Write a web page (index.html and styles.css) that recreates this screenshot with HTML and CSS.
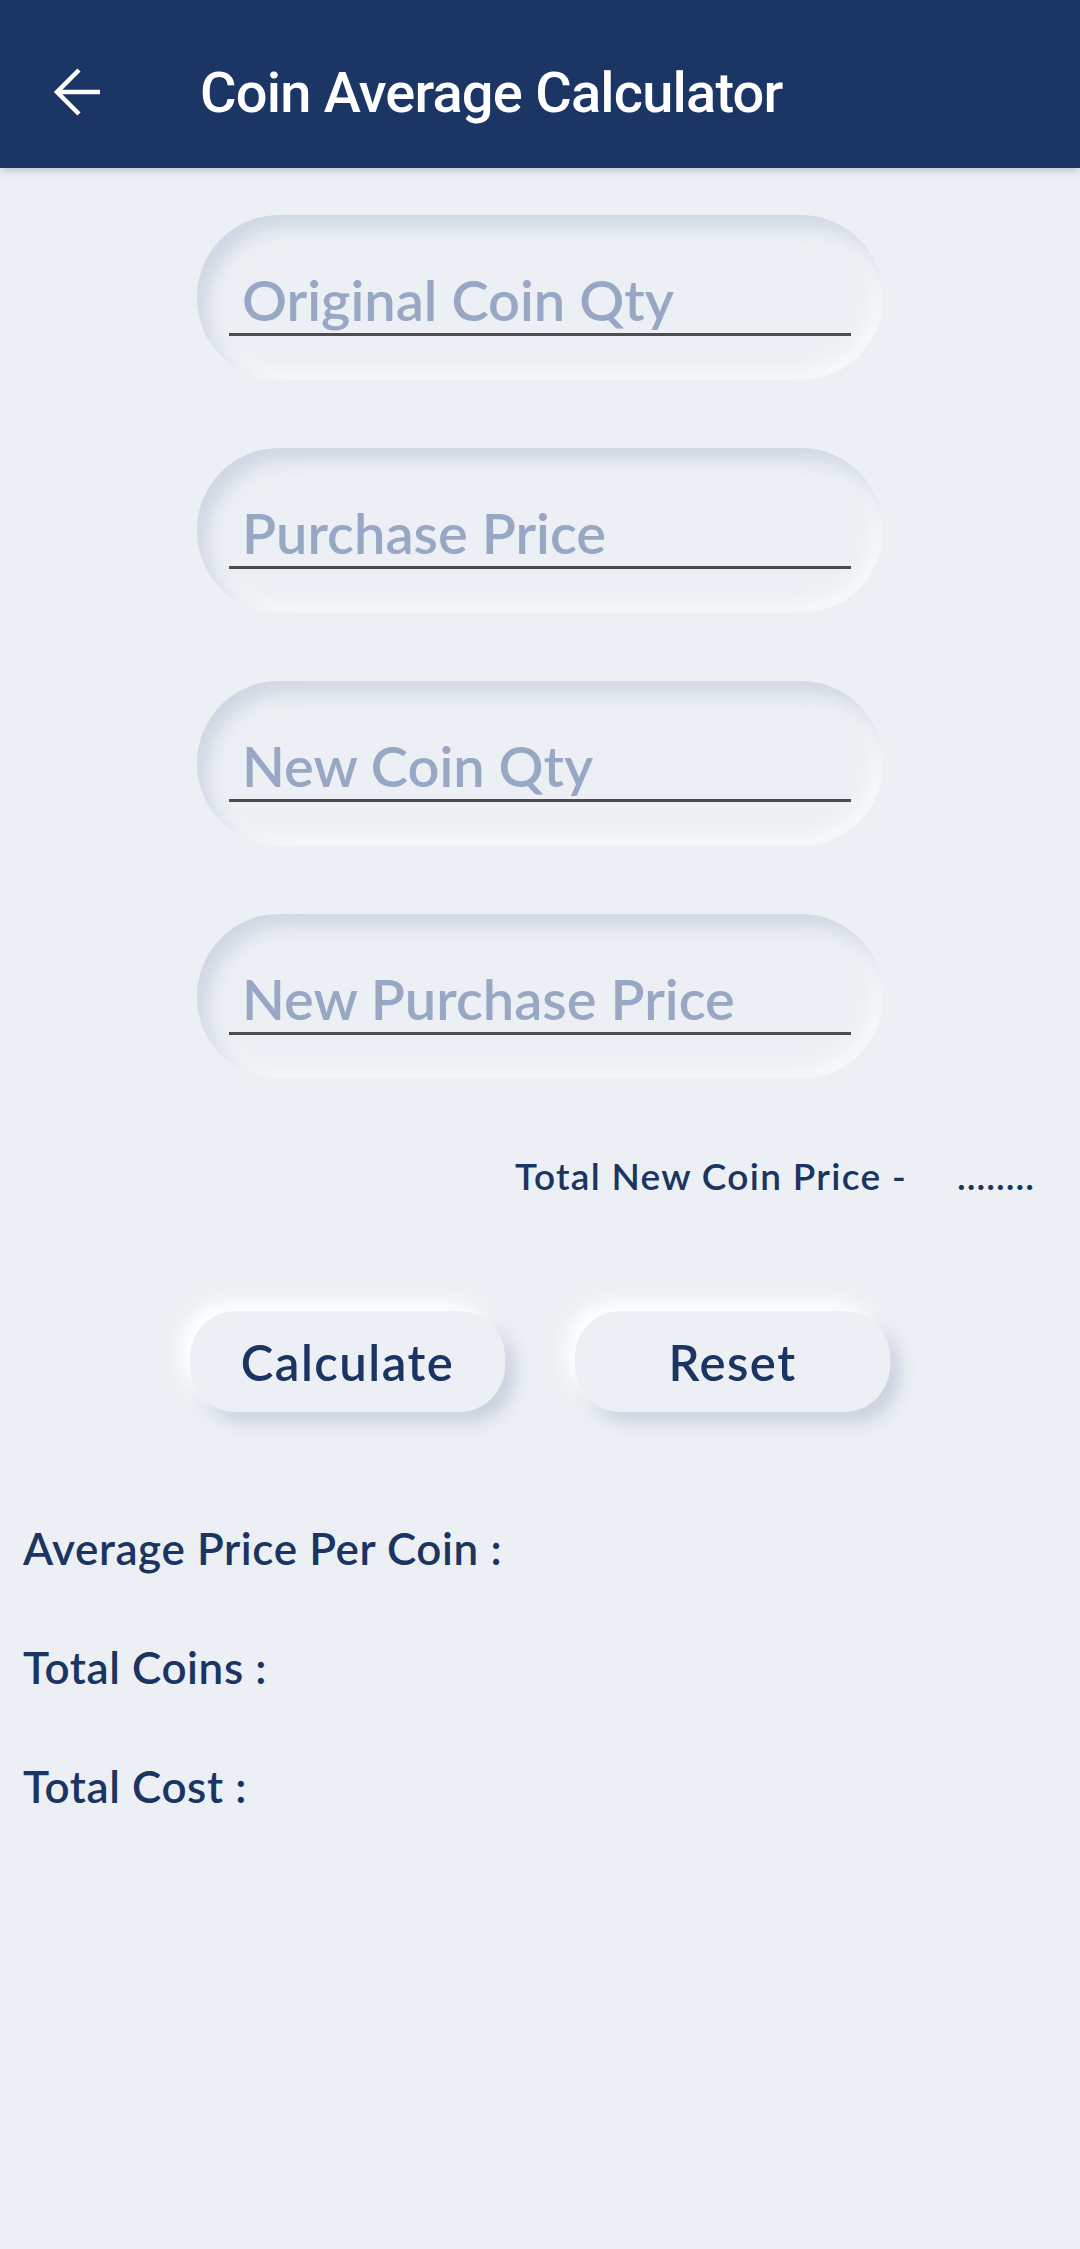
FILE: index.html
```html
<!DOCTYPE html>
<html>
<head>
<meta charset="utf-8">
<link rel="stylesheet" href="styles.css">
</head>
<body>
<header class="appbar">
  <svg class="back" width="72" height="72" viewBox="0 0 72 72">
    <path d="M59 36H17M38 14L16 36L38 58" fill="none" stroke="#ffffff" stroke-width="4.5" stroke-linecap="butt" stroke-linejoin="miter"/>
  </svg>
  <h1 class="title">Coin Average Calculator</h1>
</header>
<main class="content">
  <section class="fields">
    <div class="field"><div class="input">Original Coin Qty</div></div>
    <div class="field"><div class="input">Purchase Price</div></div>
    <div class="field"><div class="input">New Coin Qty</div></div>
    <div class="field"><div class="input">New Purchase Price</div></div>
  </section>
  <div class="total-row">
    <span class="total-label">Total New Coin Price -</span>
    <span class="total-value">........</span>
  </div>
  <div class="buttons">
    <button class="btn">Calculate</button>
    <button class="btn">Reset</button>
  </div>
  <section class="results">
    <p class="result">Average Price Per Coin :</p>
    <p class="result">Total Coins :</p>
    <p class="result">Total Cost :</p>
  </section>
</main>
</body>
</html>
```
FILE: styles.css
```css
html, body {
  margin: 0;
  padding: 0;
}
body {
  width: 1080px;
  min-height: 2249px;
  background: #ecf0f4;
  font-family: "Lato", "Noto Sans", sans-serif;
  color: #1b3462;
}
.appbar {
  height: 168px;
  background: #1b3565;
  display: flex;
  align-items: center;
  box-shadow: 0 3px 8px rgba(0, 0, 0, 0.18);
  position: relative;
  z-index: 2;
}
.back {
  margin-left: 41px;
  margin-top: 16px;
  flex: none;
}
.title {
  margin: 18px 0 0 87px;
  font-family: "Roboto", sans-serif;
  font-weight: 500;
  font-size: 56px;
  letter-spacing: -0.8px;
  color: #ffffff;
  line-height: 1;
}
.content {
  padding-top: 47px;
}
.fields {
  display: flex;
  flex-direction: column;
  gap: 68px;
  padding-left: 197px;
}
.field {
  width: 686px;
  height: 165px;
  box-sizing: border-box;
  border-radius: 82px;
  background: #ecf0f4;
  box-shadow: inset 10px 12px 18px #cfd7e3, inset -8px -10px 16px #f7f9fb;
  padding: 55px 32px 0 32px;
}
.input {
  font-size: 56px;
  line-height: 60px;
  font-weight: 600;
  color: #98a8c4;
  padding-left: 13px;
  padding-bottom: 3px;
  border-bottom: 3px solid #4d4d4f;
  white-space: nowrap;
}
.total-row {
  display: flex;
  justify-content: flex-end;
  align-items: baseline;
  gap: 50px;
  padding-right: 45px;
  margin-top: 72px;
  font-size: 37px;
  font-weight: 600;
  line-height: 50px;
}
.total-label {
  letter-spacing: 1.3px;
}
.total-value {
  letter-spacing: 1px;
}
.buttons {
  display: flex;
  gap: 70px;
  padding-left: 190px;
  margin-top: 110px;
}
.btn {
  width: 315px;
  height: 101px;
  border: none;
  border-radius: 46px;
  background: #ecf0f4;
  box-shadow: -9px -9px 18px #ffffff, 9px 10px 18px #c6cfdd;
  font-family: "Lato", "Noto Sans", sans-serif;
  font-size: 49px;
  letter-spacing: 1.5px;
  font-weight: 600;
  color: #1b3462;
  padding: 0;
}
.results {
  padding-left: 23px;
  margin-top: 106px;
  display: flex;
  flex-direction: column;
  gap: 59px;
}
.result {
  margin: 0;
  font-size: 44px;
  letter-spacing: 0.6px;
  font-weight: 600;
  line-height: 60px;
}
```
